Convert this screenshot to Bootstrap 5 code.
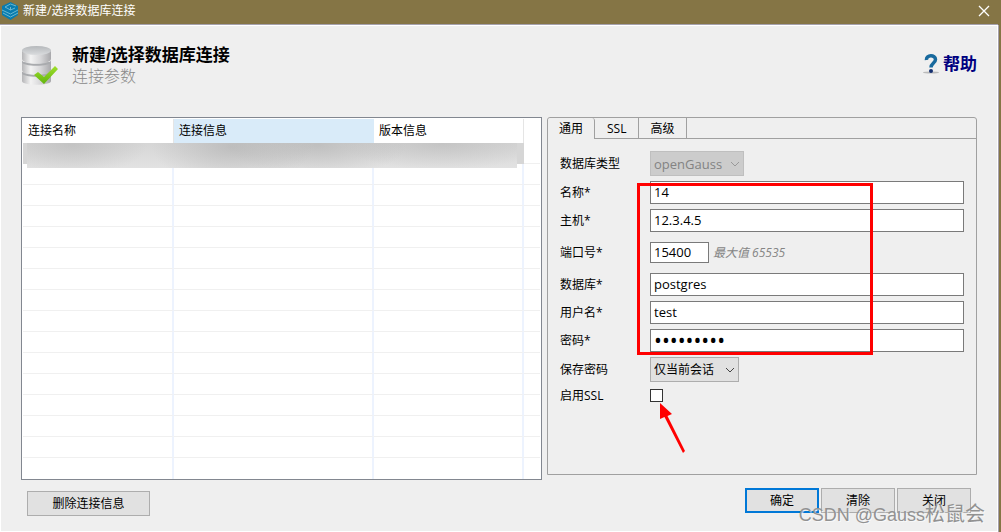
<!DOCTYPE html>
<html lang="zh-CN">
<head>
<meta charset="utf-8">
<meta name="viewport" content="width=device-width, initial-scale=1">
<title>新建/选择数据库连接</title>
<link href="https://cdn.jsdelivr.net/npm/bootstrap@5.3.0/dist/css/bootstrap.min.css" rel="stylesheet">
<style>
  body { font: 12px/16px "Open Sans", "Noto Sans CJK SC", sans-serif; background: #857545; color: #000; }
  .titlebar { height: 24px; padding: 0 11px 2px 2px; background: #857545; color: #fff; gap: 4px; }
  .titlebar button, .help-link { border: 0; background: none; padding: 0; line-height: 0; }
  .dialog-face { background: #efefef; border: 1px solid #fff; box-shadow: 0 -1px #a5a1ad, 1px 0 #a5a1ad; margin: 1px 3px 0 0; padding: 0 20px 15px 20px; }
  .heading { height: 91px; padding: 19px 0 0 0; }
  .heading-text { padding-left: 13px; }
  .heading h1 { font: 700 17px/22px "Liberation Sans", "Noto Sans CJK SC", sans-serif; margin: 0; }
  .heading p { font-size: 16px; line-height: 18px; color: #8a8a8a; font-weight: 300; margin: 0; }
  .help-link { color: #000080; font-size: 17px; line-height: 22px; font-weight: 700; text-decoration: none; gap: 4px; margin-top: 8px; }
  .panes { gap: 5px; }
  .pane-list { flex: 521 1 0; min-width: 0; }
  .pane-form { flex: 430 1 0; min-width: 0; }
  .list-box { border: 1px solid #828790; background: #fff; padding: 1px 1px 0; }
  .conn-grid { width: 100%; table-layout: fixed; border-collapse: separate; border-spacing: 0; }
  .conn-grid th { height: 24px; padding: 0 5px; font-weight: 400; border-right: 1px solid #e5e5e5; }
  .conn-grid th.hot { background: #d9ebf9; border-color: #d9ebf9; }
  .conn-grid td { height: 21px; padding: 0; border-bottom: 1px solid #f0f0f0; border-right: 2px solid #edf3fe; }
  .conn-grid th:last-child, .conn-grid td:last-child { border-right: 0; }
  .conn-grid tr:last-child td { border-bottom: 0; }
  .conn-grid tr.picked td:not(:last-child) { background: #d6d6d6; border-color: #d6d6d6; }
  .redacted { top: 25px; left: 5px; width: 490px; height: 25px;
    background:
      radial-gradient(ellipse 75px 30px at 45px 2px, #b0b0b080, #b0b0b000),
      radial-gradient(ellipse 80px 38px at 205px 4px, #aaaaaa90, #aaaaaa00),
      radial-gradient(ellipse 90px 32px at 290px 2px, #adadad90, #adadad00),
      radial-gradient(ellipse 100px 26px at 415px 1px, #adadad70, #adadad00),
      linear-gradient(#d6d6d6, #e2e2e2); }
  .tab-box { border: 1px solid #a0a0a0; border-radius: 3px 3px 0 0; height: 358px; }
  .tab-strip { height: 21px; border-bottom: 1px solid #a0a0a0; }
  .tab-strip button { border: 0; border-right: 1px solid #a0a0a0; background: #efefef; padding: 1px 12px 0 11px; height: 20px; color: #000; }
  .tab-strip button:nth-child(2) { padding-left: 12px; }
  .tab-strip button.active { height: 21px; border-radius: 3px 3px 0 0; padding: 0 11px; }
  .params { padding: 12px 12px 0; gap: 5px; }
  .params label { width: 90px; flex: none; }
  .params input:not([type=checkbox]) { height: 23px; border: 1px solid #7a7a7a; border-radius: 0; background: #fff; padding: 0 3px 1px; font-size: 13px; color: #000; outline: 0; min-width: 0; }
  .params input[type=password] { font-size: 21px; }
  .port-row { height: 31px; }
  .params .port-row input { width: 59px; height: 21px; }
  .ssl-row { height: 17px; }
  .params select { height: 25px; border: 1px solid #adadad; border-radius: 0; appearance: none; padding: 0 3px; color: #000;
    background: #e1e1e1 url("data:image/svg+xml,%3Csvg xmlns='http://www.w3.org/2000/svg' width='10' height='6'%3E%3Cpath d='M1 1l4 4 4-4' fill='none' stroke='%23444'/%3E%3C/svg%3E") no-repeat right 3px center; }
  .params select:disabled { width: 94px; font-size: 13px; opacity: 1; color: #838383; background-color: #ccc; border-color: #bfbfbf;
    background-image: url("data:image/svg+xml,%3Csvg xmlns='http://www.w3.org/2000/svg' width='10' height='6'%3E%3Cpath d='M1 1l4 4 4-4' fill='none' stroke='%23999'/%3E%3C/svg%3E"); }
  #keep { width: 89px; }
  #ssl { appearance: none; width: 13px; height: 13px; border: 1px solid #333; background: #fff; margin: 0; }
  .hint { color: #858585; font-style: italic; margin-left: 4px; }
  .mark-frame { left: 89px; top: 65px; width: 236px; height: 172px; border: 3px solid #f00; pointer-events: none; }
  .mark-arrow { left: 112px; top: 285px; pointer-events: none; }
  .push { border: 1px solid #adadad; background: #e1e1e1; height: 25px; padding: 0; color: #000; width: 74px; }
  .push.primary { border: 2px solid #0078d7; }
  .push.wide { width: 123px; margin: 11px 0 0 6px; }
  .actions { gap: 2px; padding: 13px 6px 0 0; }
  .stamp { right: 16px; bottom: 6px; font: 18px/22px "Liberation Sans", "Noto Sans CJK SC", sans-serif; color: #929292; text-shadow: 1px 1px #fff9; pointer-events: none; white-space: nowrap; }
  .stamp span { font-size: 20px; }
</style>
</head>
<body class="d-flex flex-column min-vh-100 position-relative">
<header class="titlebar d-flex align-items-center">
  <svg width="17" height="18" viewBox="0 0 17 18"><path d="M8.500 0 16 4v9l-7.500 5L0 13V4z" fill="#087caf"/><path d="M14 4 8.500 2 3 5l5.500 3L13 6M0 8l8.500 4L16 8M1 11l7.500 4 7.500-4M8.500 8V5" fill="none" stroke="#6bb7d0"/></svg>
  <span>新建/选择数据库连接</span>
  <button type="button" class="ms-auto" aria-label="关闭窗口"><svg width="12" height="12" viewBox="0 0 12 12"><path d="M1 1l10 10M11 1 1 11" stroke="#fff" stroke-width="1.300"/></svg></button>
</header>

<main class="dialog-face flex-grow-1">
  <div class="heading d-flex align-items-start">
    <svg width="38" height="41" viewBox="0 0 38 41" class="flex-shrink-0">
      <defs>
        <linearGradient id="steel"><stop offset="0" stop-color="#b5b5b7"/><stop offset=".3" stop-color="#f3f3f3"/><stop offset=".65" stop-color="#d6d6d8"/><stop offset="1" stop-color="#a8a8ab"/></linearGradient>
        <linearGradient id="lid" x2="0" y2="1"><stop offset="0" stop-color="#b5b8bb"/><stop offset="1" stop-color="#dadcde"/></linearGradient>
        <linearGradient id="leaf" x2="0" y2="1"><stop offset="0" stop-color="#a0df2c"/><stop offset="1" stop-color="#62b50e"/></linearGradient>
      </defs>
      <path d="M1 27v9c0 5 29 5 29 0v-9z" fill="url(#steel)"/>
      <path d="M1 26c0 5 29 5 29 0v2c0 5-29 5-29 0z" fill="#a9abae"/>
      <path d="M1 17v8c0 6 29 6 29 0v-8z" fill="url(#steel)"/>
      <path d="M1 15c0 5 29 5 29 0v2c0 5-29 5-29 0z" fill="#a9abae"/>
      <path d="M1 5v9c0 6 29 6 29 0V5z" fill="url(#steel)"/>
      <ellipse cx="15.500" cy="5.500" rx="14.500" ry="4.500" fill="url(#lid)"/>
      <path d="m13 30 4-3 6 5L34 21l3 3-14 15z" fill="url(#leaf)"/>
    </svg>
    <div class="heading-text flex-grow-1"><h1>新建/选择数据库连接</h1><p>连接参数</p></div>
    <a href="#" class="help-link d-flex align-items-center">
      <svg width="16" height="20" viewBox="0 0 16 20"><ellipse cx="8" cy="18.500" rx="8" ry="1" fill="#bbb"/><path d="M3.500 6C3 .5 12.500.5 12.500 5.500 12.500 9 8 9 8 13.500" fill="none" stroke="#17699d" stroke-width="3.500"/><circle cx="8" cy="17" r="2" fill="#142f70"/></svg>
      <span>帮助</span>
    </a>
  </div>

  <div class="panes d-flex align-items-start">
    <section class="pane-list">
      <div class="list-box position-relative">
        <table class="conn-grid">
          <colgroup><col style="width:151px"><col style="width:200px"><col style="width:150px"><col></colgroup>
          <thead><tr><th scope="col">连接名称</th><th scope="col" class="hot">连接信息</th><th scope="col">版本信息</th><th></th></tr></thead>
          <tbody>
            <tr class="picked"><td></td><td></td><td></td><td></td></tr>
            <tr><td></td><td></td><td></td><td></td></tr><tr><td></td><td></td><td></td><td></td></tr>
            <tr><td></td><td></td><td></td><td></td></tr><tr><td></td><td></td><td></td><td></td></tr>
            <tr><td></td><td></td><td></td><td></td></tr><tr><td></td><td></td><td></td><td></td></tr>
            <tr><td></td><td></td><td></td><td></td></tr><tr><td></td><td></td><td></td><td></td></tr>
            <tr><td></td><td></td><td></td><td></td></tr><tr><td></td><td></td><td></td><td></td></tr>
            <tr><td></td><td></td><td></td><td></td></tr><tr><td></td><td></td><td></td><td></td></tr>
            <tr><td></td><td></td><td></td><td></td></tr><tr><td></td><td></td><td></td><td></td></tr>
            <tr><td></td><td></td><td></td><td></td></tr>
          </tbody>
        </table>
        <div class="redacted position-absolute"></div>
      </div>
      <button type="button" class="push wide">删除连接信息</button>
    </section>

    <section class="pane-form">
      <div class="tab-box position-relative">
        <div class="tab-strip d-flex" role="tablist">
          <button type="button" role="tab" aria-selected="true" class="active">通用</button>
          <button type="button" role="tab">SSL</button>
          <button type="button" role="tab">高级</button>
        </div>
        <form class="params d-flex flex-column">
          <div class="d-flex align-items-center"><label for="kind">数据库类型</label><select id="kind" disabled><option>openGauss</option></select></div>
          <div class="d-flex align-items-center"><label for="nm">名称*</label><input id="nm" class="flex-grow-1" value="14"></div>
          <div class="d-flex align-items-center"><label for="host">主机*</label><input id="host" class="flex-grow-1" value="12.3.4.5"></div>
          <div class="port-row d-flex align-items-center"><label for="port">端口号*</label><input id="port" value="15400"><span class="hint">最大值 65535</span></div>
          <div class="d-flex align-items-center"><label for="db">数据库*</label><input id="db" class="flex-grow-1" value="postgres"></div>
          <div class="d-flex align-items-center"><label for="usr">用户名*</label><input id="usr" class="flex-grow-1" value="test"></div>
          <div class="d-flex align-items-center"><label for="pw">密码*</label><input id="pw" type="password" class="flex-grow-1" value="opengauss"></div>
          <div class="d-flex align-items-center"><label for="keep">保存密码</label><select id="keep"><option>仅当前会话</option></select></div>
          <div class="ssl-row d-flex align-items-center"><label for="ssl">启用SSL</label><input id="ssl" type="checkbox"></div>
        </form>
        <div class="mark-frame position-absolute"></div>
        <svg class="mark-arrow position-absolute" width="26" height="52" viewBox="0 0 26 52"><path d="M0 0 12 11 7.500 13 25 48 23 50 4.500 14 0 16z" fill="#f00"/></svg>
      </div>
      <div class="actions d-flex justify-content-end">
        <button type="button" class="push primary">确定</button>
        <button type="button" class="push">清除</button>
        <button type="button" class="push">关闭</button>
      </div>
    </section>
  </div>
</main>
<div class="stamp position-absolute">CSDN @Gauss<span>松鼠会</span></div>
<script src="https://cdn.jsdelivr.net/npm/bootstrap@5.3.0/dist/js/bootstrap.bundle.min.js"></script>
</body>
</html>
